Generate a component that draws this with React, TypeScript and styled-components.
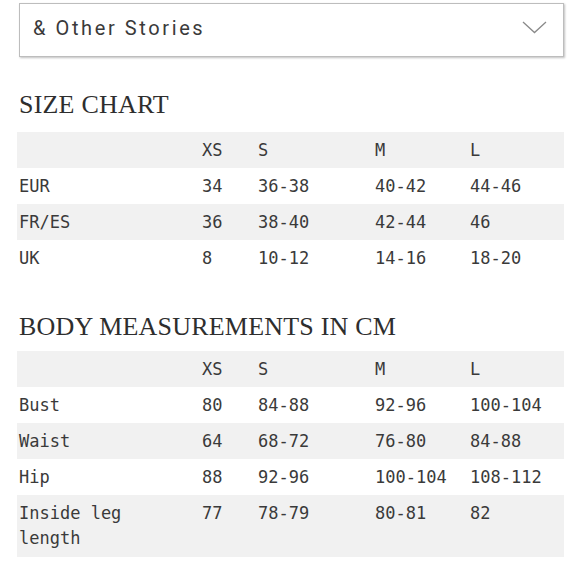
import React from "react";
import styled, { createGlobalStyle } from "styled-components";

const Global = createGlobalStyle`
  html, body { margin: 0; padding: 0; background: #fff; }
  body { width: 580px; height: 580px; overflow: hidden; }
`;

const Page = styled.div`
  padding: 3px 16px 0 17px;
  display: flex;
  flex-direction: column;
  color: #3a3a3a;
`;

const Select = styled.div`
  height: 48px;
  box-sizing: content-box;
  border: 1px solid #bdbdbd;
  box-shadow: 1px 1px 2px rgba(0, 0, 0, 0.25);
  display: flex;
  align-items: center;
  justify-content: space-between;
  padding: 0 16px 4px 13px;
  margin-left: 2px;
  font-family: Roboto, "Liberation Sans", sans-serif;
  font-size: 20px;
  letter-spacing: 2.6px;
  color: #3a3a3a;
`;

const Chevron = styled.svg`
  margin-bottom: 2px;
`;

const Heading = styled.h2<{ $top: number; $bottom: number }>`
  margin: ${(p) => p.$top}px 0 ${(p) => p.$bottom}px 0;
  font-family: "Liberation Serif", serif;
  font-weight: normal;
  font-size: 26px;
  letter-spacing: 0.2px;
  color: #2e2e2e;
  padding-left: 2px;
  line-height: 30px;
`;

const Table = styled.div`
  display: grid;
  grid-template-columns: 183px 56px 117px 95px 1fr;
  font-family: "DejaVu Sans Mono", monospace;
  font-size: 17px;
  color: #3a3a3a;
`;

const Row = styled.div<{ $shade: boolean; $h: number }>`
  display: contents;
  & > div {
    background: ${(p) => (p.$shade ? "#f1f1f1" : "#fff")};
    min-height: ${(p) => p.$h}px;
  }
`;

const Cell = styled.div<{ $label?: boolean }>`
  padding: 6px ${(p) => (p.$label ? "40px" : "0")} 0 2px;
  line-height: 25px;
  box-sizing: border-box;
`;

const ChevronIcon = () => (
  <Chevron width="25" height="13" viewBox="0 0 25 13" fill="none">
    <path d="M1 1 L12.5 11.5 L24 1" stroke="#8a8a8a" strokeWidth="1.3" />
  </Chevron>
);

type R = { cells: string[]; h?: number };

const SizeTable = ({ rows }: { rows: R[] }) => (
  <Table>
    {rows.map((r, i) => (
      <Row key={i} $shade={i % 2 === 0} $h={r.h ?? 36}>
        {r.cells.map((c, j) => (
          <Cell key={j} $label={j === 0}>
            {c}
          </Cell>
        ))}
      </Row>
    ))}
  </Table>
);

export default function App() {
  return (
    <>
      <Global />
      <Page>
        <Select>
          <span>&amp; Other Stories</span>
          <ChevronIcon />
        </Select>
        <Heading $top={33} $bottom={12}>SIZE CHART</Heading>
        <SizeTable
          rows={[
            { cells: ["", "XS", "S", "M", "L"] },
            { cells: ["EUR", "34", "36-38", "40-42", "44-46"] },
            { cells: ["FR/ES", "36", "38-40", "42-44", "46"] },
            { cells: ["UK", "8", "10-12", "14-16", "18-20"] },
          ]}
        />
        <Heading $top={36} $bottom={9}>BODY MEASUREMENTS IN CM</Heading>
        <SizeTable
          rows={[
            { cells: ["", "XS", "S", "M", "L"] },
            { cells: ["Bust", "80", "84-88", "92-96", "100-104"] },
            { cells: ["Waist", "64", "68-72", "76-80", "84-88"] },
            { cells: ["Hip", "88", "92-96", "100-104", "108-112"] },
            { cells: ["Inside leg length", "77", "78-79", "80-81", "82"], h: 62 },
          ]}
        />
      </Page>
    </>
  );
}
